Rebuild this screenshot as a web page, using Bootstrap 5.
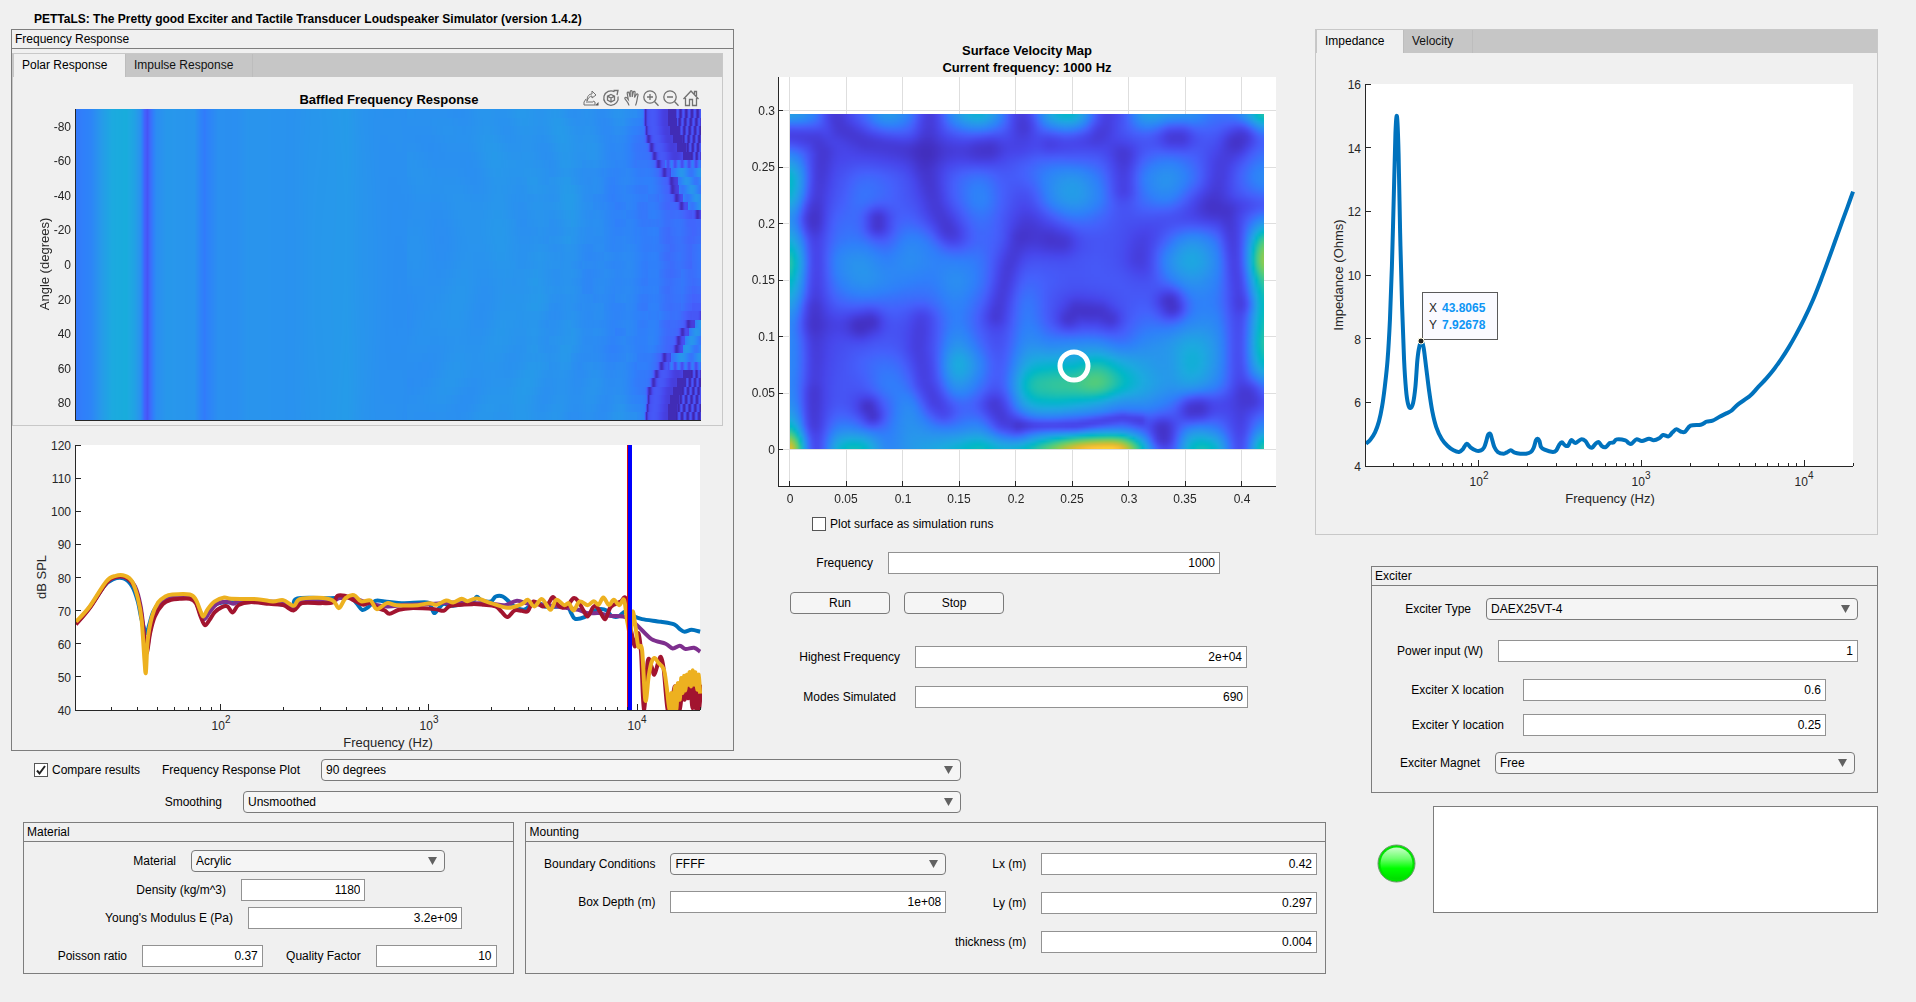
<!DOCTYPE html>
<html lang="en">
<head>
<meta charset="utf-8">
<meta name="viewport" content="width=device-width, initial-scale=1">
<title>PETTaLS</title>
<link href="https://cdn.jsdelivr.net/npm/bootstrap@5.3.0/dist/css/bootstrap.min.css" rel="stylesheet">
<style>
body{background:#f0f0f0;color:#000;font:12px/16px "Liberation Sans",Arial,sans-serif}
.app-title{font-size:12px;line-height:16px;padding:11px 0 2px 23px;margin:0;font-weight:700}
.page{padding:0 38px 0 11px}
.board{display:grid;grid-template-columns:minmax(0,723fr) minmax(0,581fr) minmax(0,12fr) minmax(0,551fr);align-items:start}
.a-freq{grid-area:1/1/2/2}
.a-surf{grid-area:1/2/2/3}
.a-opts{grid-area:2/1/3/3;padding:8px 354px 9px 23px}
.a-pans{grid-area:3/1/4/4;padding:0 1px 0 12px;gap:11px}
.a-right{grid-area:1/3/4/5}
.group{border:1px solid #7d7d7d}
.group>h2{font-size:12px;line-height:18px;margin:0;padding:0 3px;border-bottom:1px solid #7d7d7d;font-weight:400}
.tabs{border:1px solid #c8c8c8}
.tabs-freq{margin:4px 10px 0 0}
.tabs .nav{background:#c6c6c6;padding-left:1px;height:23px}
.tabs .nav-link{background:#c6c6c6;color:#111;font-size:12px;line-height:23px;padding:0 8px;border:0;border-right:1px solid #bdbdbd;border-radius:0;text-align:left;width:127px}
.tabs .nav-link.active{background:#f0f0f0;color:#000;width:112px}
.tabs-sm .nav-link{width:69px}
.tabs-sm .nav-link.active{width:87px}
svg.plot{display:block;width:100%;height:auto;font-family:"Liberation Sans",Arial,sans-serif;font-size:12px;fill:#262626}
.plot .ax{stroke:#262626;fill:none;stroke-width:1;shape-rendering:crispEdges}
.plot .gridline{stroke:#dedede;fill:none;shape-rendering:crispEdges}
.plot .lab{font-size:13px}
.plot .ttl{font-size:13px;font-weight:700;fill:#000}
.plot .curve{fill:none;stroke-width:4;stroke-linejoin:round;vector-effect:non-scaling-stroke}
.plot canvas{display:block;width:100%;height:100%}
.tools{stroke:#707070;stroke-width:1;fill:none}
.frow{display:flex;align-items:center;gap:15px}
.frow>label{text-align:right;white-space:nowrap;flex:none}
.frow .form-control,.frow .form-select{flex:1 1 0;min-width:0;width:0;height:22px;min-height:22px;font-size:12px;line-height:16px;color:#000;box-shadow:none}
.frow .form-control{border:1px solid #929292;border-radius:0;padding:1px 4px;text-align:right;background:#fff}
.frow .form-select{border:1px solid #7a7a7a;border-radius:4px;padding:2px 20px 2px 4px;background:#f5f5f5 url("data:image/svg+xml,%3Csvg xmlns='http://www.w3.org/2000/svg' viewBox='0 0 9 8'%3E%3Cpath d='M0 0h9L4.500 8z' fill='%23616161'/%3E%3C/svg%3E") no-repeat right 7px center/9px 8px}
.tick{appearance:none;width:14px;height:14px;border:1px solid #555;background:#fff;margin:0;flex:none}
.tick:checked{background:#fff url("data:image/svg+xml,%3Csvg xmlns='http://www.w3.org/2000/svg' viewBox='0 0 12 12'%3E%3Cpath d='M2 6.500l2.500 3L10 2' fill='none' stroke='%23222' stroke-width='2'/%3E%3C/svg%3E") center/12px 12px}
.push{width:100px;height:22px;padding:0;font-size:12px;line-height:18px;color:#000;background:#f5f5f5;border:1px solid #7a7a7a;border-radius:4px}
.w-80{width:80px}.w-83{width:83px}.w-99{width:99px}.w-103{width:103px}.w-108{width:108px}.w-111{width:111px}.w-129{width:129px}.w-132{width:132px}.w-139{width:139px}.w-145{width:145px}.w-152{width:152px}.w-166{width:166px}.w-188{width:188px}.w-202{width:202px}.w-209{width:209px}
.opts-a{gap:4px}
.a-opts .form-select{margin-left:6px}
.f-mat{flex:491 1 0;height:152px}.f-mnt{flex:801 1 0;height:152px}
.mnt-l{flex:420 1 0}.mnt-r{flex:371 1 0}
.exciter{margin:31px 0 0 56px;height:227px}
.status{padding-left:62px;margin-top:13px;gap:17px}
.lamp{width:39px;height:39px;flex:none;display:block;margin-top:8px}
.status textarea{flex:1;height:107px;border:1px solid #7d7d7d;border-radius:0;resize:none;padding:4px;font-size:12px}
</style>
</head>
<body>
<main class="page">
<h1 class="app-title">PETTaLS: The Pretty good Exciter and Tactile Transducer Loudspeaker Simulator (version 1.4.2)</h1>
<div class="board">

<section class="a-freq group">
  <h2>Frequency Response</h2>
  <div class="tabs tabs-freq">
    <div class="nav" role="tablist">
      <button class="nav-link active" role="tab" type="button">Polar Response</button>
      <button class="nav-link" role="tab" type="button">Impulse Response</button>
    </div>
    <svg class="plot" viewBox="13 77 709 348">
      <text class="ttl" x="389" y="104" text-anchor="middle">Baffled Frequency Response</text>
      <foreignObject x="76" y="109" width="625" height="311"><canvas id="polarMap"></canvas></foreignObject>
      <path class="ax" d="M75.500 109V420.500H701"/>
      <g id="polarAxes"></g>
      <text class="lab" transform="translate(49 264) rotate(-90)" text-anchor="middle">Angle (degrees)</text>
      <g class="tools">
        <g transform="translate(583 90)"><path d="M3 9l-2 3v3h11v-3l-2-1M3 12h7M4 11c0-5 2-7 5-7V1l4 4-4 3V6C7 6 5 8 4 11z"/><path d="M15.500 12v3.500H12z" fill="#555" stroke="none"/></g>
        <g transform="translate(603 90)"><path d="M11.500 1.800A7.200 7.200 0 1 0 15 6.500" stroke-width="1.300"/><path d="M10.500 .5l4.500 0-1 4.500" stroke-width="1.300"/><path d="M8 4.500l3.500 1.700v4L8 12l-3.500-1.800v-4zM4.500 6.200L8 8l3.500-1.800M8 8v4" stroke-width="1.300"/></g>
        <g transform="translate(624 90)"><path d="M5 15.500C4.500 12 1 10 .8 8.200c0-1.200 1.500-1.200 2.200-.2l1.300 1.600L3.200 3.300c-.2-1.500 1.500-1.700 1.900-.3L6.200 7V1.800c0-1.500 2-1.500 2 0V7l1-4.700c.4-1.400 2-1 1.900.4L10.500 7.500l1.800-3c.7-1.200 2.100-.5 1.700.7-1 3.500-1 7.300-2.500 10.300" stroke-width="1.200"/></g>
        <g transform="translate(643 90)" stroke-width="1.300"><circle cx="7" cy="7" r="6.200"/><path d="M4 7h6M7 4v6M11.500 11.500l4 4.300"/></g>
        <g transform="translate(663 90)" stroke-width="1.300"><circle cx="7" cy="7" r="6.200"/><path d="M4 7h6M11.500 11.500l4 4.300"/></g>
        <g transform="translate(683 90)" stroke-width="1.300"><path d="M.5 9L8 1l7.500 8M2.500 8v7.500h4v-6h3v6h4V8M11.500 4V1.500h2V6"/></g>
      </g>
    </svg>
  </div>
  <svg class="plot" viewBox="12 426 721 324">
    <rect x="76" y="445" width="624" height="265" fill="#fff"/>
    <svg x="76" y="445" width="626" height="265" viewBox="161 75 1326 796" preserveAspectRatio="none">
      <path class="curve" stroke="#0072bd" data-points="161,610 190,563 220,500 240,478 262,476 280,500 292,545 300,600 310,640 316,615 325,575 340,545 355,532 372,526 400,526 412,538 422,570 432,595 440,580 452,558 470,548 500,548 540,545 600,555 620,562 630,536 700,535 740,532 755,550 767,570 780,562 795,543 815,545 850,550 905,548 913,560 920,580 930,565 940,552 960,558 1000,545 1010,531 1020,542 1040,545 1050,530 1065,530 1080,548 1090,560 1110,570 1130,550 1145,552 1160,562 1200,560 1210,580 1218,597 1238,592 1255,575 1270,568 1285,572 1295,588 1310,590 1325,575 1340,588 1360,598 1400,606 1428,614 1440,628 1450,636 1465,630 1483,636"/>
      <path class="curve" stroke="#7e2f8e" data-points="161,612 190,563 225,490 245,472 268,474 286,500 298,560 306,650 311,690 317,640 326,580 340,548 355,535 375,528 402,528 415,545 425,585 433,598 445,575 460,552 480,545 495,552 510,543 600,548 622,562 640,545 700,545 720,535 750,535 780,550 820,560 860,555 920,552 960,548 1000,550 1040,552 1070,556 1095,543 1120,552 1150,555 1190,562 1225,570 1245,580 1270,580 1290,588 1320,590 1335,600 1352,620 1380,658 1410,672 1425,686 1440,678 1452,688 1470,684 1483,696"/>
      <path class="curve" stroke="#a2142f" data-points="161,614 190,565 225,490 245,471 268,474 286,505 298,570 306,660 311,700 318,640 328,590 345,553 362,540 380,537 402,537 415,550 425,590 434,616 444,600 455,577 470,562 482,560 493,578 505,556 530,547 570,552 600,556 622,572 640,550 680,550 705,548 715,528 730,528 745,538 758,548 770,555 785,548 800,565 815,572 825,582 845,570 870,565 920,568 940,573 955,558 1000,553 1025,555 1050,560 1062,575 1075,592 1090,572 1105,573 1118,574 1130,545 1150,560 1162,550 1172,532 1185,560 1200,560 1215,535 1225,545 1235,570 1245,590 1255,565 1262,558 1272,578 1282,598 1292,565 1300,555 1315,545 1325,535 1332,600 1338,640 1345,680 1352,640 1358,700 1364,870 1372,725 1380,740 1386,765 1394,730 1400,712 1406,750 1414,868 1422,860 1430,800 1440,872 1446,790 1450,840 1454,800 1458,836 1462,800 1467,866 1470,800 1474,868 1477,800 1481,872 1485,795"/>
      <path class="curve" stroke="#edb120" data-points="161,606 190,560 225,485 245,468 265,468 280,485 292,535 300,600 306,720 309,758 313,660 322,590 335,548 350,530 365,524 402,524 415,540 425,575 431,590 440,568 455,545 475,533 490,537 545,538 578,545 600,541 622,558 635,538 675,534 705,542 718,565 732,535 750,526 765,545 785,542 798,568 820,550 840,556 885,556 910,550 925,555 945,542 960,548 978,537 990,544 1010,536 1040,550 1075,564 1105,553 1118,540 1132,560 1148,538 1166,570 1178,540 1195,556 1205,550 1215,572 1228,545 1245,556 1258,544 1268,555 1278,533 1290,556 1300,540 1312,556 1322,540 1328,600 1335,640 1340,575 1346,620 1352,680 1360,690 1367,842 1374,770 1380,728 1387,715 1395,730 1406,748 1412,800 1418,868 1422,820 1426,868 1430,800 1433,868 1436,790 1440,840 1443,775 1446,820 1449,768 1452,812 1455,765 1458,795 1461,757 1464,800 1467,752 1470,795 1473,758 1477,810 1480,765 1483,822"/>
    </svg>
    <rect x="627" y="445" width="1" height="265" fill="#d81010"/>
    <rect x="628" y="445" width="4" height="265" fill="#0000fd"/>
    <g id="splAxes"></g>
    <text class="lab" x="388" y="747" text-anchor="middle">Frequency (Hz)</text>
    <text class="lab" transform="translate(46 577) rotate(-90)" text-anchor="middle">dB SPL</text>
  </svg>
</section>

<section class="a-surf">
  <svg class="plot" viewBox="734 29 581 484">
    <text class="ttl" x="1027" y="55" text-anchor="middle">Surface Velocity Map</text>
    <text class="ttl" x="1027" y="72" text-anchor="middle">Current frequency: 1000 Hz</text>
    <rect x="778" y="77" width="498" height="409" fill="#fff"/>
    <g id="surfGrid"></g>
    <foreignObject x="790" y="114" width="474" height="335"><canvas id="surfMap"></canvas></foreignObject>
    <circle cx="1074" cy="366" r="14" fill="none" stroke="#fff" stroke-width="5"/>
    <g id="surfAxes"></g>
  </svg>
  <div class="d-flex align-items-center gap-1" style="height:22px;padding-left:78px">
    <input class="tick" type="checkbox" id="plotRun"><label for="plotRun">Plot surface as simulation runs</label>
  </div>
  <div class="frow" style="margin:17px 95px 0 0"><label class="w-139" for="freq">Frequency</label><input class="form-control" id="freq" value="1000"></div>
  <div class="d-flex" style="margin-top:18px;padding-left:56px;gap:14px">
    <button type="button" class="push">Run</button><button type="button" class="push">Stop</button>
  </div>
  <div class="frow" style="margin:32px 68px 0 0"><label class="w-166" for="hif">Highest Frequency</label><input class="form-control" id="hif" value="2e+04"></div>
  <div class="frow" style="margin:18px 67px 0 0"><label class="w-166" for="modes"><span class="pe-1">Modes Simulated</span></label><input class="form-control" id="modes" value="690"></div>
</section>

<section class="a-opts">
  <div class="frow">
    <div class="d-flex align-items-center opts-a"><input class="tick" type="checkbox" id="cmp" checked><label for="cmp">Compare results</label></div>
    <label for="frp" class="w-145">Frequency Response Plot</label>
    <select class="form-select" id="frp"><option>90 degrees</option></select>
  </div>
  <div class="frow" style="margin-top:10px"><label for="smo" class="w-188">Smoothing</label>
    <select class="form-select" id="smo"><option>Unsmoothed</option></select></div>
</section>

<div class="a-pans d-flex">
  <section class="group f-mat">
    <h2>Material</h2>
    <div class="frow" style="margin:8px 68px 0 0"><label class="w-152" for="mat">Material</label><select class="form-select" id="mat"><option>Acrylic</option></select></div>
    <div class="frow" style="margin:7px 148px 0 0"><label class="w-202" for="den">Density (kg/m^3)</label><input class="form-control" id="den" value="1180"></div>
    <div class="frow" style="margin:6px 51px 0 0"><label class="w-209" for="ym">Young's Modulus E (Pa)</label><input class="form-control" id="ym" value="3.2e+09"></div>
    <div class="frow" style="margin:16px 17px 0 0"><label class="w-103" for="poi">Poisson ratio</label><input class="form-control" id="poi" value="0.37"><label class="w-83" for="qf">Quality Factor</label><input class="form-control" id="qf" value="10"></div>
  </section>
  <section class="group f-mnt">
    <h2>Mounting</h2>
    <div class="d-flex" style="padding-top:11px">
      <div class="mnt-l">
        <div class="frow"><label class="w-129" for="bc">Boundary Conditions</label><select class="form-select" id="bc"><option>FFFF</option></select></div>
        <div class="frow" style="margin-top:16px"><label class="w-129" for="bd">Box Depth (m)</label><input class="form-control" id="bd" value="1e+08"></div>
      </div>
      <div class="mnt-r pe-2">
        <div class="frow"><label class="w-80" for="lx">Lx (m)</label><input class="form-control" id="lx" value="0.42"></div>
        <div class="frow" style="margin-top:17px"><label class="w-80" for="ly">Ly (m)</label><input class="form-control" id="ly" value="0.297"></div>
        <div class="frow" style="margin-top:17px"><label class="w-80" for="th">thickness (m)</label><input class="form-control" id="th" value="0.004"></div>
      </div>
    </div>
  </section>
</div>

<aside class="a-right">
  <div class="tabs tabs-sm">
    <div class="nav" role="tablist">
      <button class="nav-link active" role="tab" type="button">Impedance</button>
      <button class="nav-link" role="tab" type="button">Velocity</button>
    </div>
    <svg class="plot" viewBox="1316 53 561 481">
      <rect x="1366" y="84" width="487" height="382" fill="#fff"/>
      <g id="impAxes"></g>
      <svg x="1366" y="84" width="489" height="382" viewBox="167 192 1246 1147" preserveAspectRatio="none">
        <path class="curve" stroke="#0072bd" data-points="167,1272 178,1260 190,1238 200,1205 208,1160 215,1100 222,1020 228,900 233,740 238,520 242,340 246,290 250,400 254,640 259,860 264,1020 269,1110 274,1152 280,1165 287,1150 293,1100 298,1020 303,980 309,965 314,985 320,1040 328,1115 336,1175 346,1222 360,1258 375,1279 390,1292 404,1297 414,1288 424,1272 434,1284 448,1293 460,1292 468,1283 474,1262 478,1245 484,1243 488,1258 494,1282 503,1297 518,1302 526,1298 536,1292 546,1299 560,1302 575,1302 587,1297 594,1285 600,1262 604,1257 609,1264 613,1282 622,1290 643,1297 652,1292 659,1276 666,1268 674,1277 682,1278 690,1261 700,1270 715,1259 726,1264 735,1280 743,1284 752,1272 760,1267 768,1279 778,1282 788,1270 798,1268 806,1259 828,1262 836,1270 844,1272 856,1259 870,1264 888,1257 900,1262 914,1256 924,1246 938,1250 948,1238 958,1229 970,1236 980,1236 994,1218 1020,1215 1035,1206 1050,1203 1068,1191 1085,1181 1098,1173 1115,1154 1145,1129 1165,1104 1190,1072 1208,1046 1225,1018 1243,985 1262,946 1283,899 1305,843 1325,784 1344,724 1362,665 1380,606 1395,558 1408,515"/>
      </svg>
      <rect x="1422.500" y="292.500" width="75" height="47" fill="#fafaff" stroke="#5a5a5a"/>
      <text x="1429" y="312">X <tspan x="1442" font-weight="700" fill="#0d95f5">43.8065</tspan></text>
      <text x="1429" y="329">Y <tspan x="1442" font-weight="700" fill="#0d95f5">7.92678</tspan></text>
      <circle cx="1421" cy="341" r="3" fill="#222" stroke="#fffbe0"/>
      <text class="lab" x="1610" y="503" text-anchor="middle">Frequency (Hz)</text>
      <text class="lab" transform="translate(1343 275) rotate(-90)" text-anchor="middle">Impedance (Ohms)</text>
    </svg>
  </div>
  <section class="group exciter">
    <h2>Exciter</h2>
    <div class="frow" style="margin:12px 19px 0 0"><label class="w-99" for="et">Exciter Type</label><select class="form-select" id="et"><option>DAEX25VT-4</option></select></div>
    <div class="frow" style="margin:20px 19px 0 0"><label class="w-111" for="pw">Power input (W)</label><input class="form-control" id="pw" value="1"></div>
    <div class="frow" style="margin:17px 51px 0 0"><label for="ex" class="w-132">Exciter X location</label><input class="form-control ms-1" id="ex" value="0.6"></div>
    <div class="frow" style="margin:13px 51px 0 0"><label for="ey" class="w-132">Exciter Y location</label><input class="form-control ms-1" id="ey" value="0.25"></div>
    <div class="frow" style="margin:16px 22px 0 0"><label class="w-108" for="em">Exciter Magnet</label><select class="form-select" id="em"><option>Free</option></select></div>
  </section>
  <div class="status d-flex align-items-center">
    <svg class="lamp" viewBox="0 0 39 39" role="img" aria-label="Ready">
      <defs><linearGradient id="lg" x1="0" y1="0" x2="0" y2="1"><stop offset="0" stop-color="#c8ffc8"/><stop offset=".35" stop-color="#6dff6d"/><stop offset=".65" stop-color="#00ff00"/><stop offset="1" stop-color="#00dc00"/></linearGradient></defs>
      <circle cx="19.500" cy="19.500" r="18.500" fill="#00e400" stroke="#6a9a6a"/><circle cx="19.500" cy="19.500" r="16" fill="url(#lg)"/>
    </svg>
    <textarea class="form-control" aria-label="Messages"></textarea>
  </div>
</aside>
</div>
</main>
<script src="https://cdn.jsdelivr.net/npm/bootstrap@5.3.0/dist/js/bootstrap.bundle.min.js"></script>
<script>
const $ = id => document.getElementById(id);
const line = (x1,y1,x2,y2,c='ax') => `<path class="${c}" d="M${x1} ${y1}L${x2} ${y2}"/>`;
const text = (x,y,s,a) => `<text x="${x}" y="${y}" text-anchor="${a}">${s}</text>`;
const half = v => Math.floor(v) + .5;

/* Smooth curves through the sampled points (Catmull-Rom) */
document.querySelectorAll('[data-points]').forEach(el => {
  const q = el.dataset.points.split(' ').map(s => s.split(',').map(Number));
  let d = `M${q[0]}`;
  for(let i = 0; i < q.length-1; i++){
    const a = q[Math.max(0,i-1)], b = q[i], c = q[i+1], e = q[Math.min(q.length-1,i+2)];
    d += `C${b[0]+(c[0]-a[0])/6} ${b[1]+(c[1]-a[1])/6} ${c[0]-(e[0]-b[0])/6} ${c[1]-(e[1]-b[1])/6} ${c[0]} ${c[1]}`;
  }
  el.setAttribute('d', d);
});

/* Axes box with a linear y axis and a logarithmic x axis from 20 Hz to 20 kHz */
function logAxes(x0, x1, yTop, yBot, lo, hi, step){
  let h = line(half(x0), yTop, half(x0), yBot+1) + line(x0, half(yBot), x1, half(yBot));
  for(let v = lo; v <= hi; v += step){
    const y = yBot - (v-lo)/(hi-lo)*(yBot-yTop);
    h += line(x0, half(y), x0+6, half(y)) + text(x0-4, Math.round(y)+5, v, 'end');
  }
  for(let d = 10; d <= 10000; d *= 10) for(let m = 1; m < 10; m++){
    const f = d*m; if(f < 20 || f > 20000) continue;
    const x = x0 + Math.log10(f/20)/3*(x1-x0);
    h += line(half(x), yBot, half(x), yBot - (m === 1 ? 6 : 3));
    if(m === 1) h += text(Math.round(x), yBot+20, `10<tspan dy="-7" font-size="10">${Math.log10(f)}</tspan>`, 'middle');
  }
  return h;
}
$('splAxes').innerHTML = logAxes(75, 700, 445, 710, 40, 120, 10);
$('impAxes').innerHTML = logAxes(1365, 1853, 84, 466, 4, 16, 2);

let p = '';
for(let a = -80; a <= 80; a += 20) p += text(71, Math.round(265 + a*1.730)+4, a, 'end');
$('polarAxes').innerHTML = p;

let g = '', ax = line(778.5,77,778.5,487) + line(778,486.5,1276,486.5);
for(let i = 0; i <= 8; i++){
  const x = 789.5 + i*56.56, l = String(i*5/100);
  g += line(half(x),77,half(x),486,'gridline'); ax += line(half(x),486,half(x),481) + text(Math.round(x),503,l,'middle');
}
for(let i = 0; i <= 6; i++){
  const y = 449.5 - i*56.5;
  g += line(778,half(y),1276,half(y),'gridline'); ax += line(778,half(y),783,half(y)) + text(775,Math.round(y)+4,String(i*5/100),'end');
}
$('surfGrid').innerHTML = g; $('surfAxes').innerHTML = ax;

/* Parula colour map */
const stops = [[0,62,38,168],[.07,68,51,200],[.14,71,70,235],[.21,69,96,252],[.286,47,128,250],[.36,40,150,236],[.43,28,170,223],[.5,0,184,200],[.57,43,195,164],[.64,82,204,125],[.71,129,204,89],[.79,189,193,56],[.86,234,186,48],[.91,254,195,56],[.95,246,222,37],[1,249,251,21]];
function parula(v){
  v = Math.max(0, Math.min(1, v));
  let i = 1; while(stops[i][0] < v) i++;
  const a = stops[i-1], b = stops[i], t = (v-a[0])/(b[0]-a[0]);
  return [1,2,3].map(k => a[k] + (b[k]-a[k])*t);
}
function paint(id, w, h, f){
  const c = $(id); c.width = w; c.height = h;
  const x = c.getContext('2d'), im = x.createImageData(w, h);
  for(let j = 0, k = 0; j < h; j++) for(let i = 0; i < w; i++, k += 4){
    const q = parula(f(i, j)); im.data[k] = q[0]; im.data[k+1] = q[1]; im.data[k+2] = q[2]; im.data[k+3] = 255;
  }
  x.putImageData(im, 0, 0);
}

/* Surface velocity envelope, in percent of the maximum */
const S = [
'42 30 12 22 40 30 14 38 50 30 14 45 52 20 16 42 38 35 25 30 60',
'16 16 14 14 19 19 13 18 22 17 16 20 22 15 18 22 18 18 19 16 22',
'34 14 14 14 13 12 10 13 12 15 20 22 20 19 16 23 27 22 15 19 26',
'53 15 17 24 22 17 12 22 27 20 24 33 37 28 16 30 37 27 15 22 34',
'48 15 19 27 23 18 14 22 32 22 21 34 40 31 17 26 32 20 14 18 24',
'34 14 23 24 20 22 15 17 26 20 15 20 26 23 17 18 20 17 13 14 32',
'46 15 26 27 21 31 26 17 23 20 14 14 16 18 17 14 26 36 27 13 66',
'60 15 32 36 29 34 30 29 27 15 18 18 18 19 17 15 34 45 33 14 80',
'53 14 29 36 32 29 28 35 27 15 23 20 18 19 19 18 28 36 30 14 62',
'42 13 22 25 24 23 24 31 23 15 28 18 14 15 18 20 17 28 28 14 54',
'32 12 15 14 18 17 18 30 20 16 30 19 14 14 18 25 25 32 32 15 56',
'32 13 16 18 19 17 17 37 24 18 34 30 32 32 25 32 36 44 36 16 60',
'32 14 17 22 26 21 16 48 32 20 44 48 48 56 46 39 36 48 36 16 52',
'31 14 18 19 29 26 15 38 27 21 55 60 62 68 54 43 36 40 31 16 30',
'35 13 19 15 22 34 16 22 20 15 43 47 44 38 30 32 26 17 16 15 20',
'52 13 29 26 25 36 30 28 31 16 17 18 15 18 20 19 16 34 27 13 32',
'92 13 50 55 30 37 42 48 55 46 53 70 90 99 96 48 15 54 52 14 62'
].map(r => r.split(' ').map(Number));
const at = (j,i) => S[Math.max(0,Math.min(16,j))][Math.max(0,Math.min(20,i))];
const cub = (a,b,c,d,t) => b + .5*t*(c-a + t*(2*a-5*b+4*c-d + t*(3*(b-c)+d-a)));
const spl = (a,b,c,d,t) => ((1-t)**3*a + (3*t**3-6*t*t+4)*b + (-3*t**3+3*t*t+3*t+1)*c + t**3*d)/6;

/* Nodal lines: width, depth, then the points of the line */
const nodes = [
[8,.75,0,20,24,24,32,38,28,65,22,105],[7,.6,22,105,24,150,22,205,24,245,21,300,23,335],
[8,.75,42,0,50,14,75,27,110,33,135,38],[9,.75,138,0,136,25,134,55,145,90,157,116],[9,.5,157,116,162,122],
[8,.45,135,35,197,34],[9,.6,190,34,199,34],[9,1.300,87,105,87,111],[9,1.200,70,212,80,208],[10,.3,24,210,70,210],
[9,.7,131,205,127,235,133,270,153,299],[8,1.300,78,294,82,302],[8,.5,22,95,22,112],[8,.5,22,195,22,210],[7,.5,22,280,22,310],
[9,.75,228,0,232,12],[9,.25,232,12,232,34],[8,.75,205,202,218,155,228,125],[15,.5,236,85,238,118],
[9,.25,205,202,203,288],[9,.8,203,292,213,307,226,313],[4,.85,228,312,285,312,332,304,350,307],[8,1.100,372,315,372,325],[7,.3,350,307,372,320],
[12,.4,237,115,268,127],[9,.7,262,126,272,128],[8,.6,260,30,275,30,303,25,314,12,316,0],[8,.3,200,34,260,30],
[9,.7,334,42,334,75],[9,.3,312,22,334,42],[10,.3,334,35,386,23],[9,.9,382,23,390,23],[9,.95,446,28,452,22],
[10,.65,446,28,433,50,426,78,418,90],[12,.4,418,92,375,108,354,130,350,145],[7,.5,425,93,474,91],
[7,.65,437,100,445,155,452,190],[7,.45,452,190,449,240,452,335],[9,.9,460,280,462,286],[9,.25,350,145,380,190],
[9,1.300,380,188,382,193],[8,.95,278,205,286,196,310,198,320,205],[9,1.100,402,297,408,296],[9,.3,408,296,460,283],[8,.35,402,297,372,320]
];
function dist2(x, y, n){
  let m = 1e9;
  for(let k = 2; k+3 < n.length; k += 2){
    const dx = n[k+2]-n[k], dy = n[k+3]-n[k+1];
    const t = Math.max(0, Math.min(1, ((x-n[k])*dx + (y-n[k+1])*dy)/(dx*dx+dy*dy)));
    m = Math.min(m, (x-n[k]-t*dx)**2 + (y-n[k+1]-t*dy)**2);
  }
  return m;
}
paint('surfMap', 158, 112, (px,py) => {
  const u = px/157*20, v = py/111*16, i = Math.floor(u), j = Math.floor(v), t = u-i, s = v-j;
  const grid = f => { const r = [-1,0,1,2].map(d => f(at(j+d,i-1),at(j+d,i),at(j+d,i+1),at(j+d,i+2),t)); return f(r[0],r[1],r[2],r[3],s); };
  let val = (grid(cub)+grid(spl))/200, k = 1;
  for(const n of nodes) k *= 1 - .62*n[1]*Math.exp(-dist2(px*3+1, py*3+1, n)/(2*n[0]*n[0]));
  return Math.max(.02, val*(.25 + .75*k));
});

/* Polar response: level along the frequency axis, then directivity per 5 degree row */
const B = [[0,.27],[14,.3],[26,.38],[36,.43],[50,.44],[58,.4],[64,.34],[68,.22],[71,.18],[74,.24],[80,.33],[90,.365],[118,.355],[124,.3],[128,.275],[133,.3],[142,.34],[160,.335],[172,.355],[205,.35],[215,.345],[235,.36],[270,.375],[284,.355],[300,.345],[330,.335],[370,.345],[420,.355],[440,.36],[470,.35],[500,.35],[540,.34],[625,.33]];
function base(x){ let i = 1; while(B[i][0] < x) i++; const a = B[i-1], b = B[i]; return a[1] + (b[1]-a[1])*(x-a[0])/(b[0]-a[0]); }
const nulls = [569,569,570,572,575,578,582,588,595,596,600,605,621,634,650,665,680,690,700,690,680,665,650,636,626,612,606,602,600,588,585,580,577,573,572,571,570];
const noise = (a,b) => { const s = Math.sin(a*12.9898 + b*78.233)*43758.5453; return s - Math.floor(s) - .5; };
paint('polarMap', 625, 311, (x,y) => {
  const row = Math.min(36, Math.floor(y/311*37)), edge = Math.min(row, 36-row), a = 1 - edge/18;
  let v = base(x);
  const far = Math.max(0, (x-200)/425);
  v += far*.012*Math.sin(x/(12-far*5) + a*a*3) + far*.006*Math.sin(x/23 - row*.12);
  if(x > 330) v += .012*Math.sin(x/14 + a*a*6)*Math.cos(row*.35 + x/90);
  if(x > 410 && edge > 5) v += .02*far*noise(Math.floor(x/11), row)*Math.min(1,(x-410)/60);
  const limit = 490 + a*a*a*70;
  if(x > limit) v -= .03*Math.min(1, (x-limit)/36) + .05*Math.max(0, (x-540)/85);
  const d = x - nulls[row];
  if(d < 0) v -= .07*Math.exp(d/(5 + edge*1.500));
  else {
    const k = 591 + edge*edge*.6;
    v = .14 + .03*Math.sin(x/3);
    if(edge <= 6 && x > k) v = x < k+9 ? .03 : .1 + .09*Math.sin(x*(1.100+edge*.03) + row*1.700);
    else if(edge <= 6) v = .15 + .04*Math.sin((x-nulls[row])/4.500);
    if(edge > 5 && d > 6) v = edge === 6 ? .22 + .06*Math.sin(x*.9) : .31 + .05*Math.sin((x - edge*5)/3);
  }
  v -= Math.max(0, v-.03)*.95*Math.exp(-d*d/(edge < 3 ? 1.500 : 5));
  return v;
});
</script>
</body>
</html>
